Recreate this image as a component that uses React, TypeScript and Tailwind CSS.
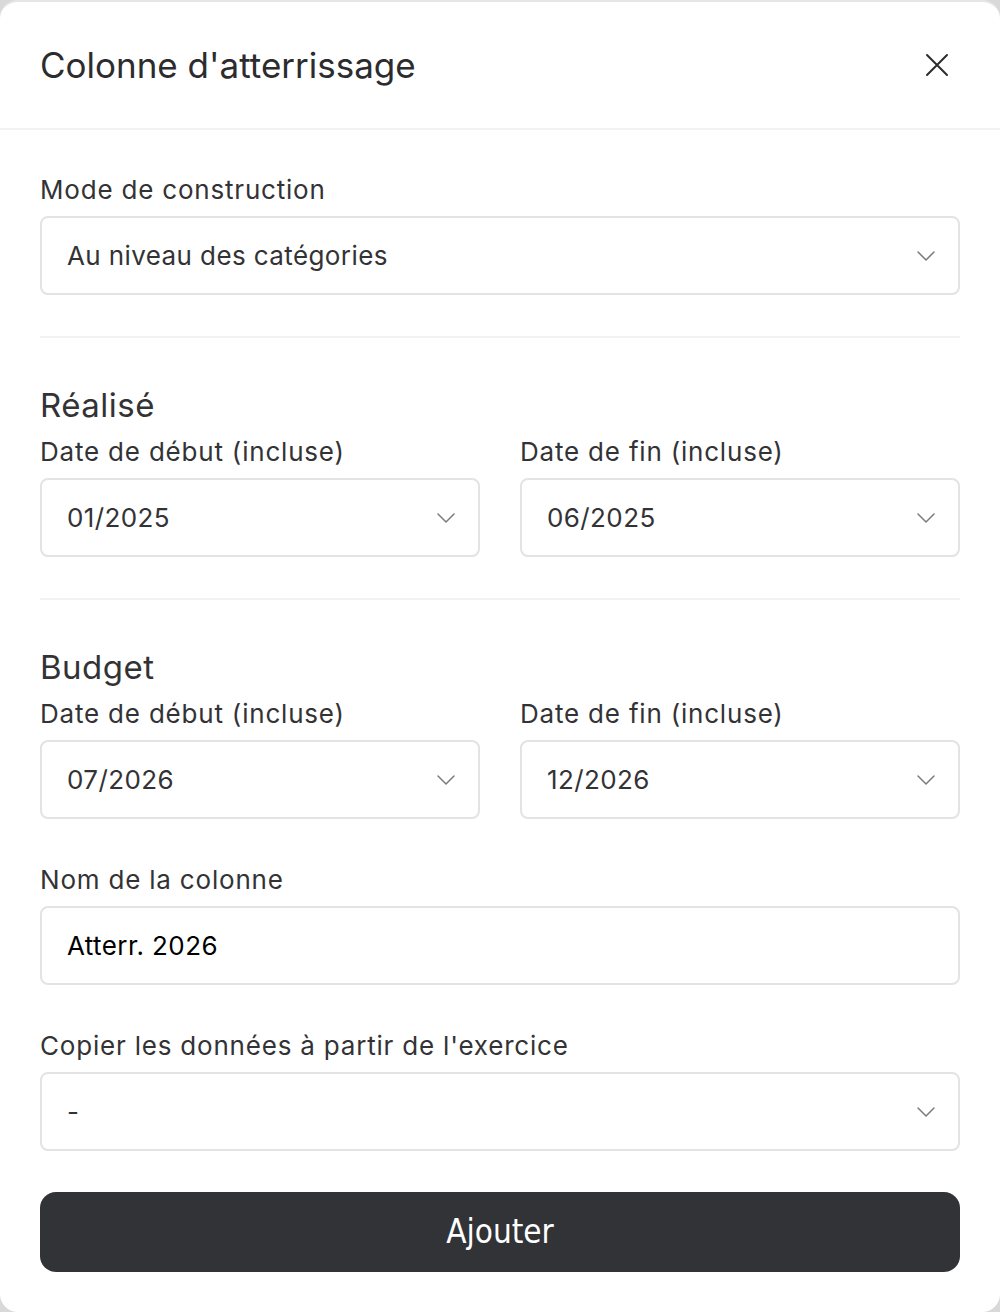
import { ReactNode } from 'react';

const FONT = { fontFamily: 'Inter, "Noto Sans", sans-serif' };

function Chevron() {
  return (
    <svg width="20" height="12" viewBox="0 0 20 12" fill="none" className="shrink-0">
      <path d="M2 2 L10 10 L18 2" stroke="#7a7a7e" strokeWidth="1.5" strokeLinecap="round" strokeLinejoin="round" />
    </svg>
  );
}

function Label({ children }: { children: ReactNode }) {
  return <div className="text-[26px] leading-[32px] tracking-[0.8px] text-[#333336] mb-[10px]">{children}</div>;
}

function SelectBox({ value }: { value: string }) {
  return (
    <div className="h-[79px] rounded-[8px] border-2 border-[#e3e3e6] flex items-center justify-between pl-[25px] pr-[22px]">
      <span className="text-[26px] tracking-[0.4px] text-[#333336]">{value}</span>
      <Chevron />
    </div>
  );
}

function Field({ label, value }: { label: string; value: string }) {
  return (
    <div>
      <Label>{label}</Label>
      <SelectBox value={value} />
    </div>
  );
}

function Divider() {
  return <div className="h-[2px] bg-[#f2f2f2]" />;
}

function DateRange({ title, start, end }: { title: string; start: string; end: string }) {
  return (
    <div>
      <div className="text-[33px] leading-[40px] tracking-[0.5px] text-[#333336] mb-[11px]">{title}</div>
      <div className="grid grid-cols-2 gap-[40px]">
        <Field label="Date de début (incluse)" value={start} />
        <Field label="Date de fin (incluse)" value={end} />
      </div>
    </div>
  );
}

export default function App() {
  return (
    <div className="w-[1000px] h-[1312px] bg-[#d9d9d9]" style={FONT}>
      <div className="w-full h-full bg-white rounded-[18px] border-t-2 border-[#e6e6e6] overflow-hidden flex flex-col">
        {/* header */}
        <div className="h-[128px] shrink-0 flex items-center justify-between pl-[40px] pr-[51px] border-b-2 border-[#f2f2f2]">
          <h1 className="text-[35px] text-[#2c2c2f]">Colonne d'atterrissage</h1>
          <svg width="24" height="24" viewBox="0 0 24 24" fill="none">
            <path d="M2 2 L22 22 M22 2 L2 22" stroke="#2c2c2f" strokeWidth="2" strokeLinecap="round" />
          </svg>
        </div>

        {/* form */}
        <div className="px-[40px] pt-[44px] flex flex-col">
          <Field label="Mode de construction" value="Au niveau des catégories" />
          <div className="mt-[41px] mb-[47px]">
            <Divider />
          </div>
          <DateRange title="Réalisé" start="01/2025" end="06/2025" />
          <div className="mt-[41px] mb-[47px]">
            <Divider />
          </div>
          <DateRange title="Budget" start="07/2026" end="12/2026" />

          <div className="mt-[45px]">
            <Label>Nom de la colonne</Label>
            <div className="h-[79px] rounded-[8px] border-2 border-[#e3e3e6] flex items-center pl-[25px]">
              <span className="text-[26px] tracking-[0.4px] text-black">Atterr. 2026</span>
            </div>
          </div>

          <div className="mt-[45px]">
            <Field label="Copier les données à partir de l'exercice" value="-" />
          </div>

          <button
            className="mt-[41px] h-[80px] rounded-[16px] bg-[#323337] text-white text-[33px]"
            style={{ fontFamily: '"DejaVu Sans Condensed", "DejaVu Sans", sans-serif' }}
          >
            Ajouter
          </button>
        </div>
      </div>
    </div>
  );
}
